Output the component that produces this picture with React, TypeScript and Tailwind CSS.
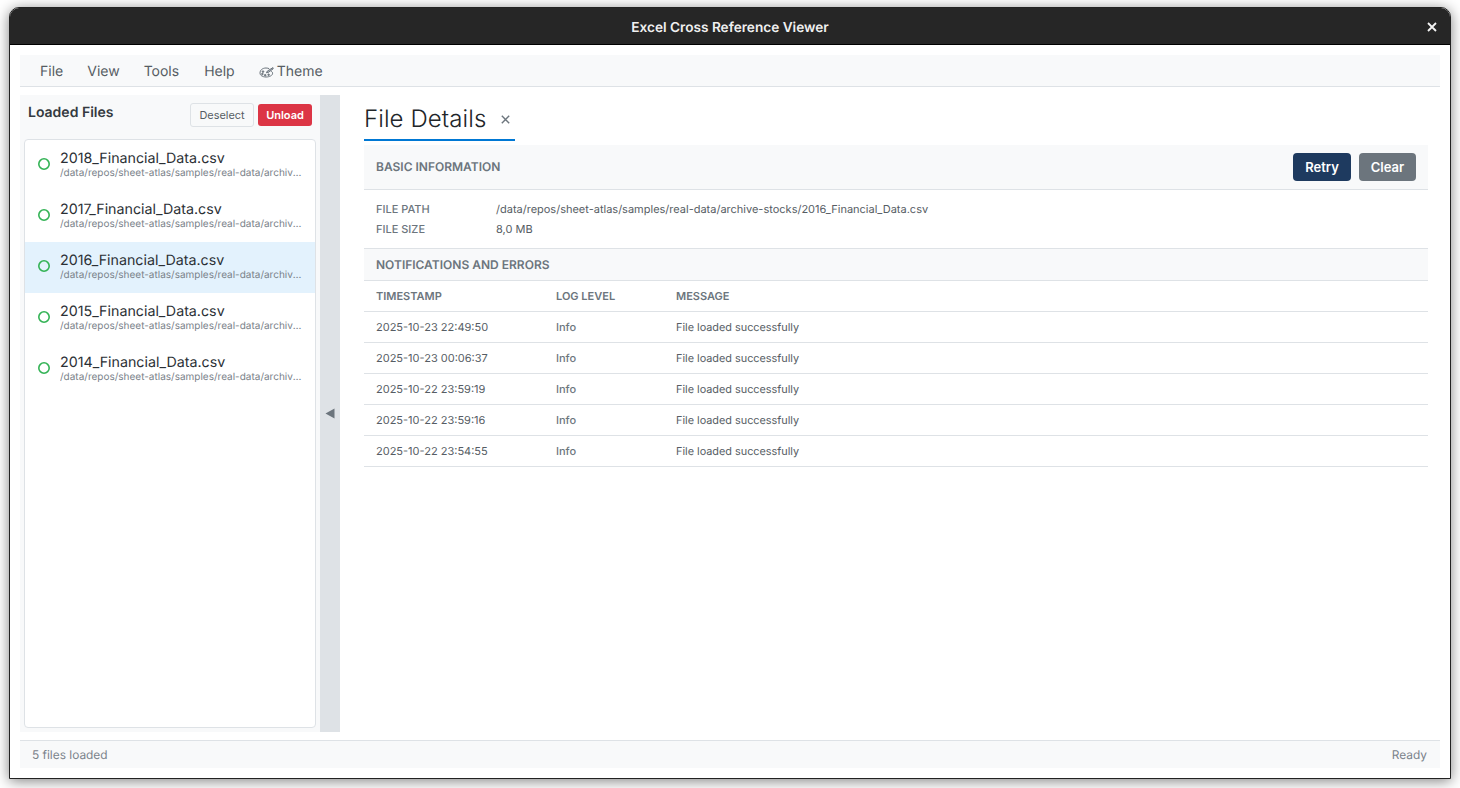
const files = ["2018", "2017", "2016", "2015", "2014"];

const logs = [
  "2025-10-23 22:49:50",
  "2025-10-23 00:06:37",
  "2025-10-22 23:59:19",
  "2025-10-22 23:59:16",
  "2025-10-22 23:54:55",
];

const PaletteIcon = () => (
  <svg width="15" height="13" viewBox="0 0 15 13" fill="none" stroke="#6c757d" strokeWidth="1">
    <path d="M1 8C1 5 3.6 3 7 3c1.4 0 2.4.3 3.2.7" />
    <path d="M1 8c0 2.6 2.8 4 6 4 3.4 0 6.6-1.4 6.6-3.8 0-1-.6-1.6-1.6-1.8" />
    <path d="M14 2.6 8.4 6 7.4 7.8l2-.4 4.8-3.6z" fill="#adb5bd" />
    <circle cx="4" cy="6.6" r=".8" fill="#6c757d" />
    <circle cx="3.4" cy="9" r=".8" fill="#6c757d" />
    <circle cx="6.2" cy="10.2" r=".8" fill="#6c757d" />
    <circle cx="9.6" cy="9.8" r=".8" fill="#6c757d" />
  </svg>
);

const StatusRing = () => (
  <svg className="ml-[13px] shrink-0" width="12" height="12" viewBox="0 0 12 12" fill="none" stroke="#34b356" strokeWidth="1.6">
    <circle cx="6" cy="6" r="5.2" />
  </svg>
);

const FileRow = ({ year }: { year: string }) => (
  <div className={`flex h-[51px] items-center pb-[3px] ${year === "2016" ? "bg-[#e3f2fd]" : ""}`}>
    <StatusRing />
    <div className="ml-[10px] min-w-0 flex-1 pr-[13px] pt-[2px]">
      <div className="text-[14.25px] leading-[17px] text-[#2b3035]">{year}_Financial_Data.csv</div>
      <div className="truncate text-[10px] leading-[13px] text-[#7a828a]">
        /data/repos/sheet-atlas/samples/real-data/archive-stocks/{year}_Financial_Data.csv
      </div>
    </div>
  </div>
);

export default function App() {
  return (
    <div className="h-[788px] w-[1460px] overflow-hidden bg-white pl-[9px] pt-[7px] font-['Inter',sans-serif] [text-rendering:geometricPrecision]">
      <div className="flex h-[772px] w-[1442px] flex-col overflow-hidden rounded-t-[10px] border border-[#222] bg-white shadow-[0_2px_14px_rgba(0,0,0,0.5)]">
        {/* title bar */}
        <div className="relative flex h-[37px] shrink-0 items-center justify-center border-b border-black bg-[#262626] pt-[4px]">
          <span className="text-[13.65px] font-semibold text-[#f0f0f0]">Excel Cross Reference Viewer</span>
          <svg className="absolute right-[13px] top-[14px]" width="10" height="10" viewBox="0 0 10 10" stroke="#f4f4f4" strokeWidth="1.8">
            <path d="M1 1l8 8M9 1l-8 8" />
          </svg>
        </div>

        <div className="flex min-h-0 flex-1 flex-col px-[10px] pb-[10px] pt-[10px]">
          {/* menu */}
          <div className="flex h-[32px] shrink-0 items-center border-b border-[#dee2e6] bg-[#f8f9fa] pl-5 pt-[1px] text-[14px] text-[#565d64]">
            <span>File</span>
            <span className="ml-6">View</span>
            <span className="ml-6">Tools</span>
            <span className="ml-[25px]">Help</span>
            <span className="ml-6 flex items-center gap-[3px]">
              <PaletteIcon />
              Theme
            </span>
          </div>

          <div className="mt-2 flex min-h-0 flex-1">
            {/* sidebar */}
            <div className="flex w-[300px] shrink-0 flex-col bg-[#f8f9fa] pb-1 pl-1 pr-1">
              <div className="flex h-[44px] shrink-0 items-start justify-between pl-1 pt-[8px]">
                <span className="pt-[1px] text-[14px] font-semibold leading-[18px] text-[#343a40]">Loaded Files</span>
                <div className="flex items-start gap-1 pr-1">
                  <button className="h-6 w-16 rounded-[3px] border border-[#dee2e6] bg-[#f8f9fa] text-[10.9px] text-[#565d64]">Deselect</button>
                  <button className="mt-[1px] h-[22px] w-[54px] rounded-[3px] bg-[#dc3545] text-[11px] font-semibold text-white">Unload</button>
                </div>
              </div>
              <div className="min-h-0 flex-1 overflow-hidden rounded-[4px] border border-[#dee2e6] bg-white">
                {files.map((y) => (
                  <FileRow key={y} year={y} />
                ))}
              </div>
            </div>

            {/* splitter */}
            <div className="flex w-5 shrink-0 items-center justify-center bg-[#dee2e6]">
              <svg width="10" height="11" viewBox="0 0 10 11" fill="#6c757d">
                <path d="M0.5 5.5 9.5 0.5v10z" />
              </svg>
            </div>

            {/* details */}
            <div className="min-w-0 flex-1 bg-white pl-6 pr-3">
              <div className="flex h-[46px] w-[151px] items-center border-b-2 border-[#0078d4] pt-1">
                <span className="text-[24px] font-light tracking-[0.1px] text-[#212529]">File Details</span>
                <svg className="ml-[15px] mt-[1px]" width="9" height="9" viewBox="0 0 9 9" stroke="#6c757d" strokeWidth="1.4">
                  <path d="M.8.8l7.4 7.4M8.2.8.8 8.2" />
                </svg>
              </div>

              <div className="mt-[4px] flex h-[45px] items-center justify-between border-b border-[#dee2e6] bg-[#f8f9fa] px-3">
                <span className="text-[12px] font-semibold text-[#6c757d]">BASIC INFORMATION</span>
                <div className="flex gap-2">
                  <button className="h-7 w-[58px] rounded-[4px] bg-[#1e3a5f] pt-[1px] text-[13px] font-semibold text-white">Retry</button>
                  <button className="h-7 w-[57px] rounded-[4px] bg-[#6c757d] pt-[1px] text-[13px] font-semibold text-white">Clear</button>
                </div>
              </div>

              <div className="flex h-[59px] flex-col justify-center gap-[6px] border-b border-[#dee2e6] px-3 pb-[1px] text-[11px] leading-[14px]">
                <div className="flex">
                  <span className="w-[120px] font-medium text-[#6c757d]">FILE PATH</span>
                  <span className="text-[#565d64]">/data/repos/sheet-atlas/samples/real-data/archive-stocks/2016_Financial_Data.csv</span>
                </div>
                <div className="flex">
                  <span className="w-[120px] font-medium text-[#6c757d]">FILE SIZE</span>
                  <span className="text-[#565d64]">8,0 MB</span>
                </div>
              </div>

              <div className="flex h-[32px] items-center border-b border-[#dee2e6] bg-[#f8f9fa] px-3 text-[12px] font-semibold text-[#6c757d]">
                NOTIFICATIONS AND ERRORS
              </div>

              <div className="flex h-[31px] items-center border-b border-[#dee2e6] px-3 text-[11px] font-semibold text-[#6c757d]">
                <span className="w-[180px]">TIMESTAMP</span>
                <span className="w-[120px]">LOG LEVEL</span>
                <span>MESSAGE</span>
              </div>

              {logs.map((t) => (
                <div key={t} className="flex h-[31px] items-center border-b border-[#dee2e6] px-3 text-[11px] text-[#565d64]">
                  <span className="w-[180px]">{t}</span>
                  <span className="w-[120px] font-medium text-[#6c757d]">Info</span>
                  <span className="text-[10.85px]">File loaded successfully</span>
                </div>
              ))}
            </div>
          </div>

          {/* status bar */}
          <div className="mt-2 flex h-[28px] shrink-0 items-center justify-between border-t border-[#dee2e6] bg-[#f8f9fa] pl-3 pr-[13px] text-[11.9px] text-[#7a828a]">
            <span>5 files loaded</span>
            <span>Ready</span>
          </div>
        </div>
      </div>
    </div>
  );
}
